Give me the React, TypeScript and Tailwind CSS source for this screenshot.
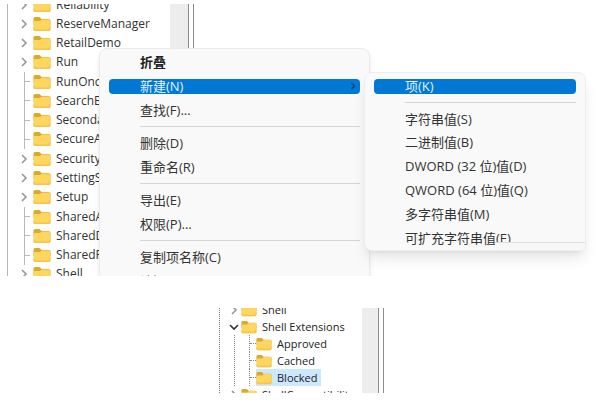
import clsx from 'clsx';

type Branch = 'closed' | 'leaf' | 'open';

interface RegistryKey {
  name: string;
  branch: Branch;
}

interface MenuEntry {
  label: string;
  bold?: boolean;
  active?: boolean;
  submenu?: boolean;
}

const keys: RegistryKey[] = [
  { name: 'Reliability', branch: 'closed' },
  { name: 'ReserveManager', branch: 'closed' },
  { name: 'RetailDemo', branch: 'closed' },
  { name: 'Run', branch: 'closed' },
  { name: 'RunOnce', branch: 'leaf' },
  { name: 'SearchBoxEventArgs', branch: 'leaf' },
  { name: 'SecondaryAuth', branch: 'leaf' },
  { name: 'SecureAssessment', branch: 'leaf' },
  { name: 'Security', branch: 'closed' },
  { name: 'SettingSync', branch: 'closed' },
  { name: 'Setup', branch: 'closed' },
  { name: 'SharedAccess', branch: 'leaf' },
  { name: 'SharedDLLs', branch: 'leaf' },
  { name: 'SharedPC', branch: 'leaf' },
  { name: 'Shell', branch: 'closed' },
];

const menuGroups: MenuEntry[][] = [
  [
    { label: '折叠', bold: true },
    { label: '新建(N)', active: true, submenu: true },
    { label: '查找(F)...' },
  ],
  [{ label: '删除(D)' }, { label: '重命名(R)' }],
  [{ label: '导出(E)' }, { label: '权限(P)...' }],
  [{ label: '复制项名称(C)' }, { label: '访问 HKEY_CURRENT_USER' }],
];

const valueTypes = [
  '字符串值(S)',
  '二进制值(B)',
  'DWORD (32 位)值(D)',
  'QWORD (64 位)值(Q)',
  '多字符串值(M)',
  '可扩充字符串值(E)',
];

function Folder({ className }: { className: string }) {
  return (
    <svg className={clsx('shrink-0', className)} viewBox="0 0 18 16" preserveAspectRatio="none" aria-hidden="true">
      <path d="M0.5 2.5Q0.5 1 2 1H6.5L8.5 3H15.5Q17.5 3 17.5 4.5V9H0.5Z" fill="#dba92c" />
      <path d="M0.5 5.7Q0.5 5 1.3 5H6.8L8.8 3.5H16.7Q17.5 3.5 17.5 4.3V13.5Q17.5 15 16 15H2Q0.5 15 0.5 13.5Z" fill="#fdd55f" />
      <path d="M0.5 11V13.5Q0.5 15 2 15H16Q17.5 15 17.5 13.5V9L15.5 13.5H2.5Z" fill="#f5c44c" />
    </svg>
  );
}

function Chevron({ open = false }: { open?: boolean }) {
  return (
    <svg className="w-3 h-3 shrink-0" viewBox="0 0 12 12" fill="none" aria-hidden="true">
      {open ? (
        <path d="M2 4L6 8L10 4" stroke="#333" strokeWidth={1.6} />
      ) : (
        <path d="M4 2L8 6L4 10" stroke="#949494" strokeWidth={1.5} />
      )}
    </svg>
  );
}

function ScrollTrack({ className }: { className: string }) {
  return (
    <div className={clsx('flex shrink-0', className)}>
      <div className="flex-1 bg-[#ededed]" />
      <div className="w-[6px] border-x border-[#8c8c8c] bg-white" />
    </div>
  );
}

function TreeRow({ item }: { item: RegistryKey }) {
  return (
    <li className="flex items-center min-h-0">
      {item.branch === 'leaf' ? (
        <span className="w-3 self-stretch flex items-center justify-end">
          <span className="self-stretch border-l border-[#b8b8b8]" />
          <span className="w-[5px] border-t border-[#b8b8b8]" />
        </span>
      ) : (
        <Chevron />
      )}
      <Folder className="w-[18px] h-[16px] ml-[3px] mr-[5px]" />
      <span className="text-[12px] leading-none whitespace-nowrap">{item.name}</span>
    </li>
  );
}

function MenuItem({ entry }: { entry: MenuEntry }) {
  return (
    <button
      role="menuitem"
      className={clsx(
        'flex w-full h-6 items-center text-left whitespace-nowrap',
        entry.bold && 'font-bold text-[#222]'
      )}
    >
      <span
        className={clsx(
          'flex flex-1 h-[15px] items-center justify-between rounded-[4px] pl-[31px] pr-[5px]',
          entry.active && 'bg-[#0078d4] text-[#e4f4ff]'
        )}
      >
        {entry.label}
        {entry.submenu && (
          <svg className="w-1 h-2" viewBox="0 0 4 8" fill="none" aria-hidden="true">
            <path d="M0.5 1L3.5 4L0.5 7" stroke="#123f73" strokeWidth={1.2} />
          </svg>
        )}
      </span>
    </button>
  );
}

function Separator() {
  return (
    <div role="separator" className="h-[9px] flex items-center pl-[31px]">
      <div className="flex-1 border-t border-[#d6d6d6]" />
    </div>
  );
}

function ContextMenu() {
  return (
    <div
      role="menu"
      className="absolute left-[92px] top-11 w-[271px] rounded-t-lg border border-[#ececec] bg-[#f9f9f9] px-[9px] pt-px text-[13px] leading-none shadow-md"
    >
      {menuGroups.map((group, i) => (
        <div key={i}>
          {i > 0 && <Separator />}
          {group.map((entry) => (
            <MenuItem key={entry.label} entry={entry} />
          ))}
        </div>
      ))}
    </div>
  );
}

function NewSubmenu() {
  return (
    <div
      role="menu"
      className="absolute left-[357px] top-[68px] w-[222px] rounded-lg rounded-br-none border border-[#eee] bg-[#f9f9f9] px-[9px] pt-px text-[13px] leading-none shadow-lg"
    >
      <MenuItem entry={{ label: '项(K)', active: true }} />
      <Separator />
      <div className="grid auto-rows-fr h-[143px]">
        {valueTypes.map((label) => (
          <MenuItem key={label} entry={{ label }} />
        ))}
      </div>
      {/* edge of the window underneath */}
      <div className="absolute right-0 bottom-0 w-[90px] h-2 border-t border-[#dedede] bg-[#f7f7f7]" />
    </div>
  );
}

function ShellTree() {
  const children = ['Approved', 'Cached', 'Blocked'];

  return (
    <section className="ml-[210px] w-[167px] h-[85px] overflow-hidden flex">
      <div className="ml-[2px] border-l border-dotted border-[#777]" />
      <ul className="flex-1 min-w-0 -mt-[7px] pl-2 text-[11px] leading-none whitespace-nowrap text-[#222]">
        <li className="flex items-center h-[17px]">
          <Chevron />
          <Folder className="w-4 h-[14px] ml-px mr-[5px]" />
          Shell
        </li>
        <li>
          <div className="flex items-center h-[17px]">
            <Chevron open />
            <Folder className="w-4 h-[14px] ml-px mr-[5px]" />
            Shell Extensions
          </div>
          <ul className="ml-[6px] border-l border-dotted border-[#888] pl-[14px]">
            {children.map((name) => (
              <li key={name} className="flex items-center h-[17px]">
                <span className="self-stretch border-l border-dotted border-[#888]" />
                <span className="w-[6px] border-t border-dotted border-[#888]" />
                <span
                  className={clsx(
                    'flex items-center h-full pr-1',
                    name === 'Blocked' && 'bg-[#cce8ff]'
                  )}
                >
                  <Folder className="w-4 h-[14px] mr-[5px]" />
                  {name}
                </span>
              </li>
            ))}
          </ul>
        </li>
        <li className="flex items-center h-[17px]">
          <Chevron />
          <Folder className="w-4 h-[14px] ml-px mr-[5px]" />
          ShellCompatibility
        </li>
      </ul>
      <ScrollTrack className="w-[22px]" />
    </section>
  );
}

export default function App() {
  return (
    <main className="min-h-screen bg-white pt-1 pl-[7px] font-['Open_Sans','Noto_Sans_CJK_SC',sans-serif] text-[#333]">
      <section className="relative h-[272px] overflow-hidden">
        <div className="flex w-[187px] h-full">
          <div className="border-l border-[#b5b5b5]" />
          <ul className="flex-1 min-w-0 -mt-[9px] h-[289px] grid auto-rows-fr pl-[10px]">
            {keys.map((item) => (
              <TreeRow key={item.name} item={item} />
            ))}
          </ul>
          <ScrollTrack className="w-6" />
        </div>
        <ContextMenu />
        <NewSubmenu />
      </section>
      <div className="mt-8">
        <ShellTree />
      </div>
    </main>
  );
}
